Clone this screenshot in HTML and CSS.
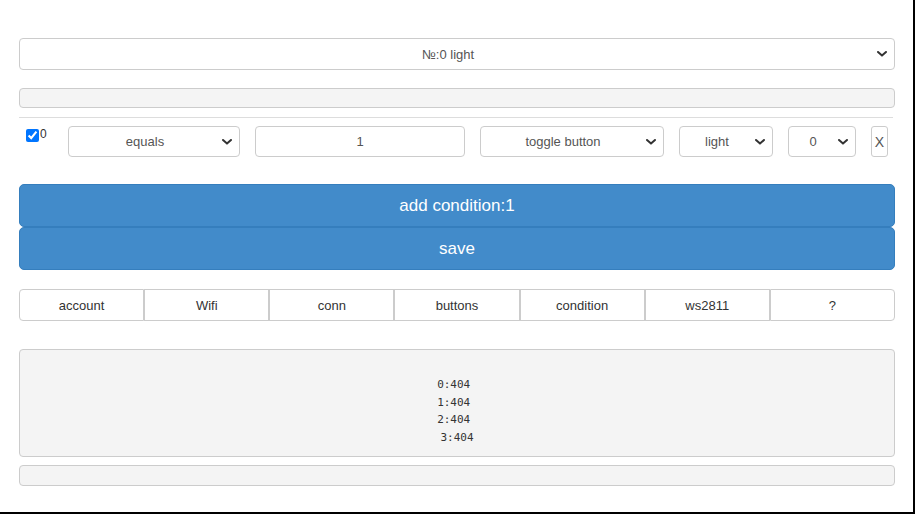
FILE: index.html
```html
<!DOCTYPE html>
<html>
<head>
<meta charset="utf-8">
<link rel="stylesheet" href="styles.css">
</head>
<body>
<div class="frame">
  <div class="page">
    <select class="ctl main-select"><option>№:0 light</option></select>
    <div class="bar"></div>
    <hr class="rule">
    <div class="cond-row">
      <label class="chk"><input type="checkbox" checked>0</label>
      <select class="ctl sel-equals"><option>equals</option></select>
      <input class="ctl inp-val" type="text" value="1">
      <select class="ctl sel-toggle"><option>toggle button</option></select>
      <select class="ctl sel-light"><option>light</option></select>
      <select class="ctl sel-num"><option>0</option></select>
      <button class="btn-x">X</button>
    </div>
    <div class="actions">
      <button class="btn-blue">add condition:1</button>
      <button class="btn-blue">save</button>
    </div>
    <div class="tabs">
      <div class="tab">account</div>
      <div class="tab">Wifi</div>
      <div class="tab">conn</div>
      <div class="tab">buttons</div>
      <div class="tab">condition</div>
      <div class="tab">ws2811</div>
      <div class="tab">?</div>
    </div>
    <div class="output">0:404 
1:404 
2:404 
 3:404 </div>
    <div class="bar bar-bottom"></div>
  </div>
</div>
</body>
</html>
```
FILE: styles.css
```css
html, body {
  margin: 0;
  padding: 0;
  background: #fff;
}
.frame {
  width: 913px;
  height: 512px;
  border-right: 2px solid #000;
  border-bottom: 2px solid #000;
  overflow: hidden;
}
.page {
  padding: 38px 0 0 19px;
  width: 876px;
  display: flex;
  flex-direction: column;
  font-family: "Liberation Sans", Arial, sans-serif;
  font-size: 13px;
  color: #333;
}
.ctl {
  box-sizing: border-box;
  border: 1px solid #ccc;
  border-radius: 4px;
  background-color: #fff;
  font-family: "Liberation Sans", Arial, sans-serif;
  font-size: 13px;
  color: #555;
  text-align: center;
  text-align-last: center;
  margin: 0;
}
select.ctl {
  appearance: none;
  -webkit-appearance: none;
  padding: 0 22px 0 4px;
  background-image: url("data:image/svg+xml,%3Csvg xmlns='http://www.w3.org/2000/svg' width='10' height='6' viewBox='0 0 10 6'%3E%3Cpath d='M1 1 L5 4.6 L9 1' fill='none' stroke='%23333' stroke-width='2' stroke-linecap='round' stroke-linejoin='round'/%3E%3C/svg%3E");
  background-repeat: no-repeat;
  background-position: right 7px center;
  background-size: 10px 6px;
}
.main-select {
  width: 876px;
  height: 32px;
}
.bar {
  box-sizing: border-box;
  height: 20px;
  margin-top: 18px;
  background: #f4f4f4;
  border: 1px solid #ccc;
  border-radius: 4px;
}
.rule {
  margin: 9px 2px 0 0;
  border: 0;
  border-top: 1px solid #ddd;
  height: 0;
}
.cond-row {
  display: flex;
  align-items: flex-start;
  gap: 15px;
  margin-top: 8px;
  padding-left: 6px;
}
.cond-row > * { flex-shrink: 0; }
.chk {
  display: flex;
  align-items: flex-start;
  font-size: 12px;
  color: #333;
  width: 28px;
  line-height: 13px;
  margin-top: 2px;
}
.chk input {
  margin: 1px 1px 0 1px;
  width: 13px;
  height: 13px;
}
.cond-row .ctl,
.cond-row .btn-x {
  height: 31px;
}
.sel-equals { width: 172px; }
.inp-val { width: 210px; padding: 0; }
.sel-toggle { width: 184px; }
.sel-light { width: 94px; }
.sel-num { width: 68px; }
.btn-x {
  box-sizing: border-box;
  width: 17px;
  padding: 0;
  border: 1px solid #ccc;
  border-radius: 3px;
  background: #fff;
  font-family: "Liberation Sans", Arial, sans-serif;
  font-size: 14px;
  color: #555;
}
.actions {
  display: flex;
  flex-direction: column;
  margin-top: 27px;
}
.btn-blue {
  box-sizing: border-box;
  height: 43px;
  width: 876px;
  background: #428bca;
  border: 1px solid #357ebd;
  border-radius: 5px;
  color: #fff;
  font-family: "Liberation Sans", Arial, sans-serif;
  font-size: 17px;
  padding: 0;
  margin: 0;
}
.tabs {
  display: grid;
  grid-template-columns: repeat(7, 1fr);
  margin-top: 19px;
  height: 32px;
}
.tab {
  box-sizing: border-box;
  display: flex;
  align-items: center;
  justify-content: center;
  border: 1px solid #ccc;
  color: #333;
}
.tab:first-child { border-radius: 4px 0 0 4px; }
.tab:last-child { border-radius: 0 4px 4px 0; }
.output {
  box-sizing: border-box;
  margin-top: 28px;
  height: 108px;
  padding-top: 26px;
  background: #f4f4f4;
  border: 1px solid #ccc;
  border-radius: 4px;
  white-space: pre;
  text-align: center;
  font-family: "DejaVu Sans Mono", monospace;
  font-size: 11px;
  line-height: 17.5px;
  color: #333;
}
.bar-bottom {
  margin-top: 8px;
  height: 21px;
}
```
